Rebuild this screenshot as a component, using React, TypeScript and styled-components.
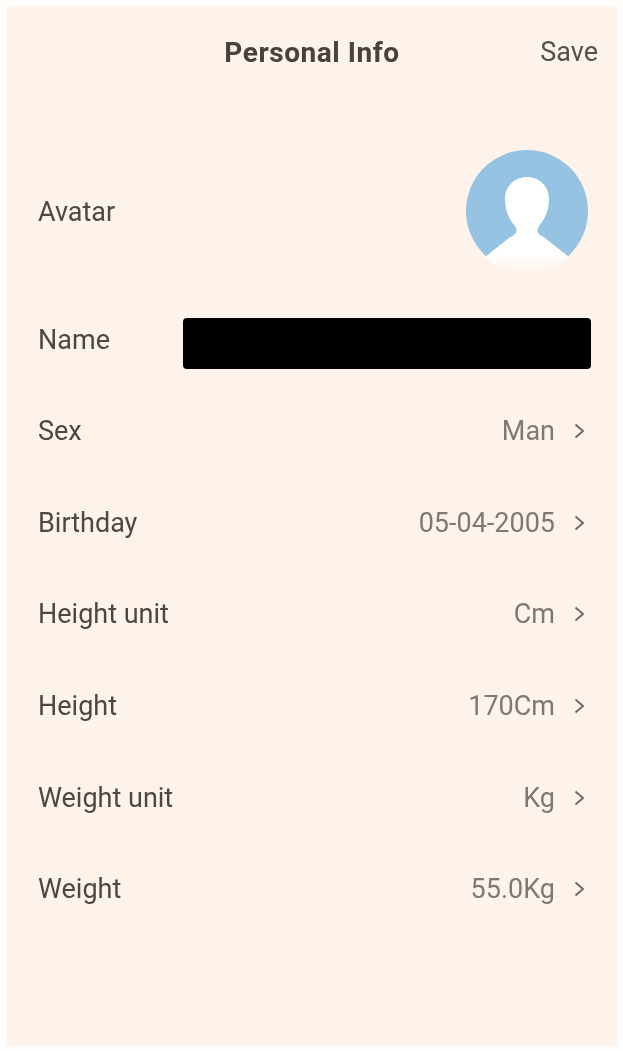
import React from "react";
import styled, { createGlobalStyle } from "styled-components";

const Global = createGlobalStyle`
  html, body { margin: 0; padding: 0; background: #fffdfb; }
  #root { width: 623px; height: 1051px; overflow: hidden; }
`;

const Screen = styled.div`
  box-sizing: border-box;
  width: 623px;
  height: 1051px;
  padding: 6px 6px 5px 7px;
`;

const Panel = styled.main`
  height: 100%;
  background: #fef3eb;
  font-family: Roboto, "Liberation Sans", sans-serif;
  filter: blur(0.7px);
`;

const Header = styled.header`
  display: grid;
  grid-template-columns: 1fr auto 1fr;
  align-items: center;
  height: 92px;
  margin-bottom: 50px;
`;

const Title = styled.h1`
  grid-column: 2;
  margin: 0;
  font-size: 28px;
  font-weight: 700;
  letter-spacing: 0.55px;
  color: #47423e;
`;

const Save = styled.span`
  justify-self: end;
  margin-right: 19px;
  font-size: 27px;
  color: #54504c;
`;

const Row = styled.div<{ $height: number; $gap?: number }>`
  display: flex;
  align-items: center;
  justify-content: space-between;
  height: ${(p) => p.$height}px;
  margin-top: ${(p) => p.$gap ?? 0}px;
  padding: 0 26px 0 31px;
`;

const Label = styled.span`
  font-size: 27px;
  color: #4c4844;
`;

const Value = styled.span`
  display: flex;
  align-items: center;
  gap: 19px;
  padding-right: 6px;
  font-size: 27px;
  color: #7d7975;
`;

const Redaction = styled.div`
  width: 408px;
  height: 51px;
  margin-top: 7px;
  border-radius: 4px;
  background: #000;
`;

const AvatarSvg = styled.svg`
  display: block;
  margin-right: 2px;
`;

const ChevronSvg = styled.svg`
  display: block;
  flex: none;
`;

const Avatar = () => (
  <AvatarSvg width="124" height="128" viewBox="0 0 124 128">
    <defs>
      <clipPath id="disc">
        <circle cx="62" cy="63" r="62.5" />
      </clipPath>
      <linearGradient id="fade" x1="0" y1="0" x2="0" y2="1">
        <stop offset="0.78" stopColor="#ffffff" />
        <stop offset="0.98" stopColor="#fef3eb" />
      </linearGradient>
    </defs>
    <circle cx="62" cy="63" r="61" fill="#95c3e1" />
    <path
      clipPath="url(#disc)"
      fill="url(#fade)"
      d="M62 29c-12 0-22 9-22 22 0 11 4 20 10 27 2 3 2 6 0 8-1 1-3 2-6 4L20 109 20 128 104 128 104 109 80 90c-3-2-5-3-6-4-2-2-2-5 0-8 6-7 10-16 10-27 0-13-10-22-22-22z"
    />
  </AvatarSvg>
);

const Chevron = () => (
  <ChevronSvg width="11" height="16" viewBox="0 0 11 16">
    <path d="M1.5 1.5 9 8l-7.5 6.5" fill="none" stroke="#6f6b67" strokeWidth="2" />
  </ChevronSvg>
);

const rows = [
  ["Sex", "Man"],
  ["Birthday", "05-04-2005"],
  ["Height unit", "Cm"],
  ["Height", "170Cm"],
  ["Weight unit", "Kg"],
  ["Weight", "55.0Kg"],
];

export default function App() {
  return (
    <Screen>
      <Global />
      <Panel>
        <Header>
          <Title>Personal Info</Title>
          <Save>Save</Save>
        </Header>
        <Row $height={128}>
          <Label>Avatar</Label>
          <Avatar />
        </Row>
        <Row $height={91} $gap={18}>
          <Label>Name</Label>
          <Redaction />
        </Row>
        {rows.map(([label, value]) => (
          <Row key={label} $height={91.7}>
            <Label>{label}</Label>
            <Value>
              {value}
              <Chevron />
            </Value>
          </Row>
        ))}
      </Panel>
    </Screen>
  );
}
